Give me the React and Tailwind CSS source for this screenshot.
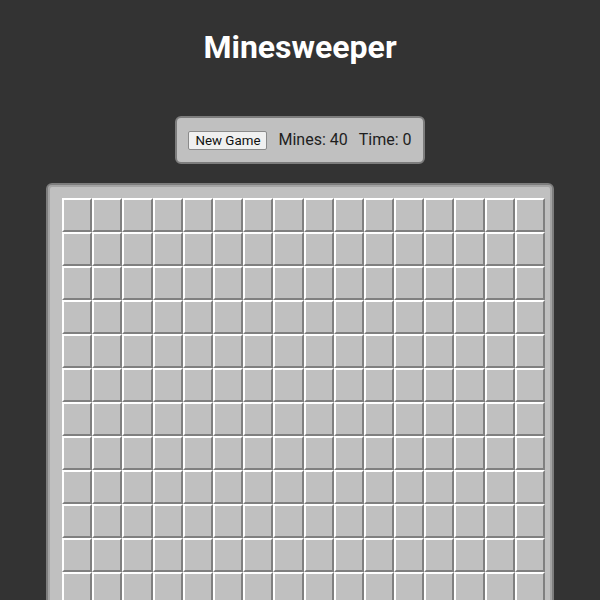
import React from "react";

const ROWS = 16;
const COLS = 16;

const Cell = () => {
  return (
    <div className="h-[34px] border-2 border-t-white border-l-white border-r-[#808080] border-b-[#808080] bg-[#c0c0c0]" />
  );
};

const App = () => {
  const cells = Array.from({ length: ROWS * COLS });

  return (
    <div
      className="min-h-screen bg-[#333333] pt-[29px] flex flex-col items-center"
      style={{ fontFamily: "Roboto, 'Liberation Sans', sans-serif" }}
    >
      {/* Title */}
      <h1 className="text-[32px] leading-9 font-bold text-white">Minesweeper</h1>

      {/* Controls */}
      <div className="mt-[51px] flex items-center gap-[11px] px-[11px] py-[10px] bg-[#c0c0c0] border-2 border-[#7d7d7d] rounded-md text-[#1e1e1e] text-base leading-6">
        <button className="px-[6px] py-px text-[13.333px] leading-[normal] bg-[#f0f0f0] border border-[#8a8a8a] rounded-[2px] text-[#111]">
          New Game
        </button>
        <span>Mines: 40</span>
        <span>Time: 0</span>
      </div>

      {/* Board */}
      <div className="mt-[19px] w-[508px] border-2 border-[#7d7d7d] rounded-md bg-[#c0c0c0] shadow-[inset_0_0_0_2px_#a4a4a4] pl-[14px] pr-[7px] pt-[13px] pb-[12px]">
        <div className="grid grid-cols-16 w-[483px]">
          {cells.map((_, i) => (
            <Cell key={i} />
          ))}
        </div>
      </div>
    </div>
  );
};

export default App;
